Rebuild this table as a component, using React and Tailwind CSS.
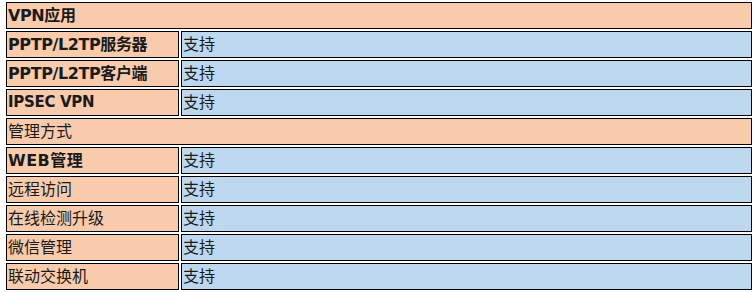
import React from "react";

const rows = [
  { type: "head", label: "VPN应用", bold: true },
  { label: "PPTP/L2TP服务器", bold: true, value: "支持", cls: "tracking-[-0.4px]" },
  { label: "PPTP/L2TP客户端", bold: true, value: "支持", cls: "tracking-[-0.4px]" },
  { label: "IPSEC VPN", bold: true, value: "支持", cls: "text-[15px] tracking-[-0.3px]" },
  { type: "head", label: "管理方式" },
  { label: "WEB管理", bold: true, value: "支持", cls: "tracking-[0.5px]" },
  { label: "远程访问", value: "支持" },
  { label: "在线检测升级", value: "支持" },
  { label: "微信管理", value: "支持" },
  { label: "联动交换机", value: "支持" },
];

export default function App() {
  return (
    <div className="w-[755px] h-[292px] bg-white overflow-hidden">
      <table
        className="ml-[4px] w-[750px] border-separate border-spacing-[2px] text-[16px] text-[#1a1a1a]"
        style={{ fontFamily: '"DejaVu Sans", "Noto Sans CJK SC", sans-serif' }}
      >
        <colgroup>
          <col className="w-[173px]" />
          <col />
        </colgroup>
        <tbody>
          {rows.map((r, i) =>
            r.type === "head" ? (
              <tr key={i}>
                <td
                  colSpan={2}
                  className={`h-[27px] p-0 pl-[1px] border border-black bg-[#F8CBAD] align-middle leading-[25px] ${r.bold ? "font-bold tracking-[-0.4px]" : "font-normal"}`}
                >
                  {r.label}
                </td>
              </tr>
            ) : (
              <tr key={i}>
                <td
                  className={`h-[27px] p-0 pl-[1px] border border-black bg-[#F8CBAD] align-middle leading-[25px] whitespace-nowrap ${r.bold ? "font-bold" : "font-normal"} ${r.cls || ""}`}
                >
                  {r.label}
                </td>
                <td className="h-[27px] p-0 pl-[1px] border border-black bg-[#BDD7EE] align-middle leading-[25px]">
                  {r.value}
                </td>
              </tr>
            )
          )}
        </tbody>
      </table>
    </div>
  );
}
